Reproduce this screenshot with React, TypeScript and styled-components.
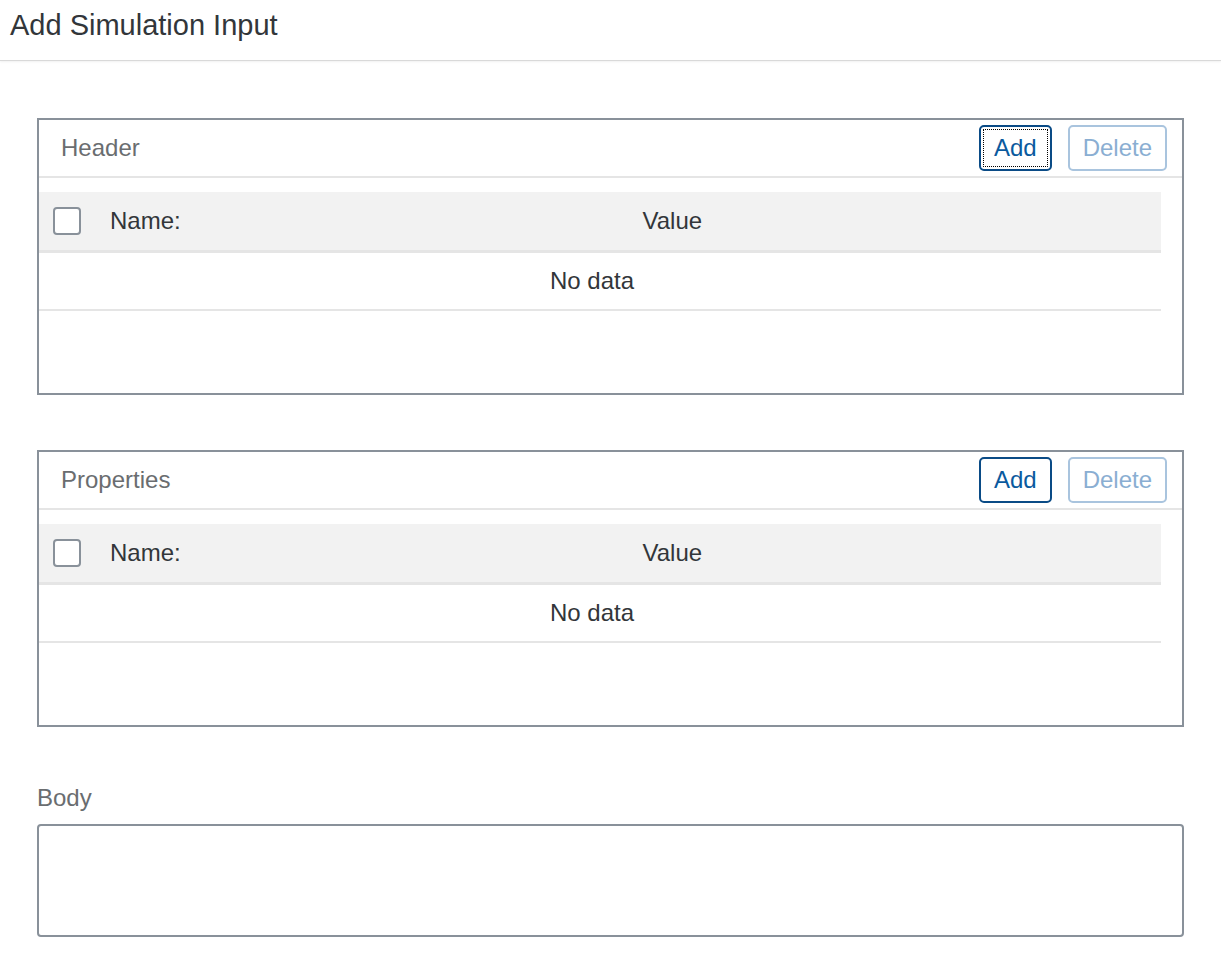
import React from 'react';
import styled, { createGlobalStyle } from 'styled-components';

const GlobalStyle = createGlobalStyle`
  html, body {
    margin: 0;
    padding: 0;
    background: #ffffff;
    font-family: "Liberation Sans", Arial, sans-serif;
    color: #32363a;
  }
  * {
    box-sizing: border-box;
  }
`;

const TitleBar = styled.header`
  height: 61px;
  display: flex;
  align-items: center;
  padding: 0 0 10px 10px;
  border-bottom: 1px solid #d9d9d9;
  box-shadow: 0 1px 2px rgba(0, 0, 0, 0.06);
  font-size: 29px;
  color: #32363a;
`;

const Content = styled.main`
  padding: 57px 37px 20px 37px;
  display: flex;
  flex-direction: column;
  gap: 55px;
`;

const Panel = styled.section`
  border: 2px solid #89919a;
  padding-bottom: 82px;
`;

const Toolbar = styled.div`
  height: 58px;
  display: flex;
  align-items: center;
  padding: 0 15px 0 22px;
  border-bottom: 2px solid #e5e5e5;
  gap: 16px;
`;

const PanelTitle = styled.h2`
  flex: 1;
  margin: 0;
  font-size: 24px;
  font-weight: normal;
  color: #6a6d70;
`;

const Button = styled.button<{ $disabled?: boolean; $focused?: boolean }>`
  height: 46px;
  padding: 0 13px;
  background: #ffffff;
  border-radius: 5px;
  font-family: inherit;
  font-size: 24px;
  cursor: ${p => (p.$disabled ? 'default' : 'pointer')};
  border: 2px solid ${p => (p.$disabled ? '#a9c4de' : '#0a4b86')};
  color: ${p => (p.$disabled ? '#8aaed2' : '#0a5a9e')};
  outline: ${p => (p.$focused ? '1px dotted #000' : 'none')};
  outline-offset: -5px;
`;

const Table = styled.div`
  margin: 14px 21px 0 0;
`;

const HeadRow = styled.div`
  display: grid;
  grid-template-columns: 57px 1fr 1fr;
  align-items: center;
  height: 61px;
  background: #f2f2f2;
  border-bottom: 3px solid #e5e5e5;
  font-size: 24px;
  color: #32363a;
`;

const CheckCell = styled.div`
  display: flex;
  align-items: center;
  padding-left: 14px;
`;

const Checkbox = styled.span`
  width: 28px;
  height: 28px;
  border: 2px solid #89919a;
  border-radius: 4px;
  background: #ffffff;
`;

const HeadCell = styled.div`
  padding-left: 14px;
`;

const EmptyRow = styled.div`
  height: 58px;
  display: flex;
  align-items: center;
  justify-content: center;
  padding-right: 16px;
  border-bottom: 2px solid #e5e5e5;
  font-size: 24px;
  color: #32363a;
`;

const BodySection = styled.div`
  margin-top: 2px;
`;

const FieldLabel = styled.label`
  display: block;
  font-size: 24px;
  color: #6a6d70;
  margin-bottom: 12px;
`;

const TextArea = styled.textarea`
  display: block;
  width: 100%;
  height: 113px;
  border: 2px solid #89919a;
  border-radius: 4px;
  resize: none;
  font-family: inherit;
  font-size: 20px;
  padding: 8px;
  outline: none;
`;

interface KeyValuePanelProps {
  title: string;
  focusAdd?: boolean;
}

const KeyValuePanel: React.FC<KeyValuePanelProps> = ({ title, focusAdd }) => (
  <Panel>
    <Toolbar>
      <PanelTitle>{title}</PanelTitle>
      <Button $focused={focusAdd}>Add</Button>
      <Button $disabled>Delete</Button>
    </Toolbar>
    <Table>
      <HeadRow>
        <CheckCell>
          <Checkbox />
        </CheckCell>
        <HeadCell>Name:</HeadCell>
        <HeadCell>Value</HeadCell>
      </HeadRow>
      <EmptyRow>No data</EmptyRow>
    </Table>
  </Panel>
);

const App: React.FC = () => {
  return (
    <>
      <GlobalStyle />
      <TitleBar>Add Simulation Input</TitleBar>
      <Content>
        <KeyValuePanel title="Header" focusAdd />
        <KeyValuePanel title="Properties" />
        <BodySection>
          <FieldLabel>Body</FieldLabel>
          <TextArea />
        </BodySection>
      </Content>
    </>
  );
};

export default App;
